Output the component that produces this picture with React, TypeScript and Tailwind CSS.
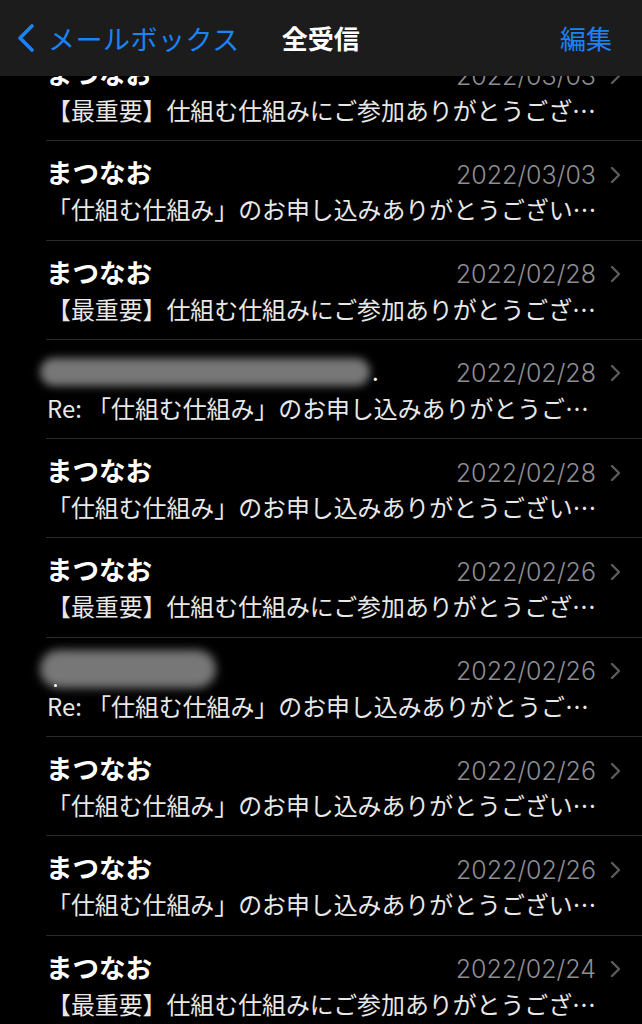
import React from 'react';

type Mail = {
    sender: string | null;
    blur?: 'long' | 'short';
    date: string;
    subject: string;
};

const A = '【最重要】仕組む仕組みにご参加ありがとうござ…';
const B = '「仕組む仕組み」のお申し込みありがとうござい…';
const C = 'Re: 「仕組む仕組み」のお申し込みありがとうご…';

const mails: Mail[] = [
    { sender: 'まつなお', date: '2022/03/03', subject: A },
    { sender: 'まつなお', date: '2022/03/03', subject: B },
    { sender: 'まつなお', date: '2022/02/28', subject: A },
    { sender: null, blur: 'long', date: '2022/02/28', subject: C },
    { sender: 'まつなお', date: '2022/02/28', subject: B },
    { sender: 'まつなお', date: '2022/02/26', subject: A },
    { sender: null, blur: 'short', date: '2022/02/26', subject: C },
    { sender: 'まつなお', date: '2022/02/26', subject: B },
    { sender: 'まつなお', date: '2022/02/26', subject: B },
    { sender: 'まつなお', date: '2022/02/24', subject: A },
];

const font = { fontFamily: '"Noto Sans CJK JP", "Noto Sans", sans-serif' };

function Chevron() {
    return (
        <svg width="12" height="18" viewBox="0 0 12 18" className="shrink-0">
            <path d="M2 2 L9 9 L2 16" fill="none" stroke="#5b5b60" strokeWidth="2.4" strokeLinecap="round" strokeLinejoin="round" />
        </svg>
    );
}

function Sender({ mail }: { mail: Mail }) {
    if (mail.sender) {
        return <span className="text-white font-bold text-[26.5px] leading-[30px]">{mail.sender}</span>;
    }
    if (mail.blur === 'long') {
        return (
            <div className="flex items-end h-[30px]">
                <div className="w-[330px] h-[28px] -ml-[6px] rounded-full bg-[#777777] blur-[4px]"></div>
                <span className="text-white text-[24px] leading-[30px] ml-[2px]">.</span>
            </div>
        );
    }
    return (
        <div className="relative h-[30px] w-[180px]">
            <div className="absolute -left-[6px] -top-[4px] w-[176px] h-[38px] rounded-full bg-[#777777] blur-[5px]"></div>
            <div className="absolute left-[8px] top-[30px] w-[3px] h-[3px] rounded-full bg-white"></div>
        </div>
    );
}

export default function App() {
    return (
        <div className="relative w-[642px] h-[1024px] bg-black overflow-hidden" style={font}>
            {/* header over the list */}
            <div className="absolute top-0 left-0 right-0 h-[76px] bg-[#1c1c1c] z-10 flex items-center">
                <div className="flex items-center pl-[14px] text-[#1a84f7]">
                    <svg width="24" height="30" viewBox="0 0 24 30">
                        <path d="M18 3 L6 15 L18 27" fill="none" stroke="#1a84f7" strokeWidth="3.6" strokeLinecap="round" strokeLinejoin="round" />
                    </svg>
                    <span className="ml-[10px] text-[27px] leading-none tracking-[0.5px]">メールボックス</span>
                </div>
                <span className="ml-[42px] text-white font-bold text-[26px] leading-none">全受信</span>
                <span className="ml-auto mr-[30px] text-[#1a84f7] text-[26px] leading-none">編集</span>
            </div>

            <div className="pt-[42px]">
                {mails.map((m, i) => (
                    <div key={i} className="pl-[46px] h-[99.3px]">
                        <div className="h-full border-b border-[#2a2a2c] pt-[16px] pr-[20px]">
                            <div className="flex items-center justify-between h-[30px]">
                                <Sender mail={m} />
                                <div className="flex items-center gap-[14px] pt-[5px]">
                                    <span className="text-[#8e8e93] text-[25px] leading-[30px]" style={{ fontFamily: 'Inter, "Noto Sans", sans-serif', fontWeight: 300 }}>
                                        {m.date}
                                    </span>
                                    <Chevron />
                                </div>
                            </div>
                            <div className="mt-[7px] text-[#e8e8e8] text-[23.9px] leading-[30px] whitespace-nowrap pl-[1px]">
                                {m.subject}
                            </div>
                        </div>
                    </div>
                ))}
            </div>
        </div>
    );
}
